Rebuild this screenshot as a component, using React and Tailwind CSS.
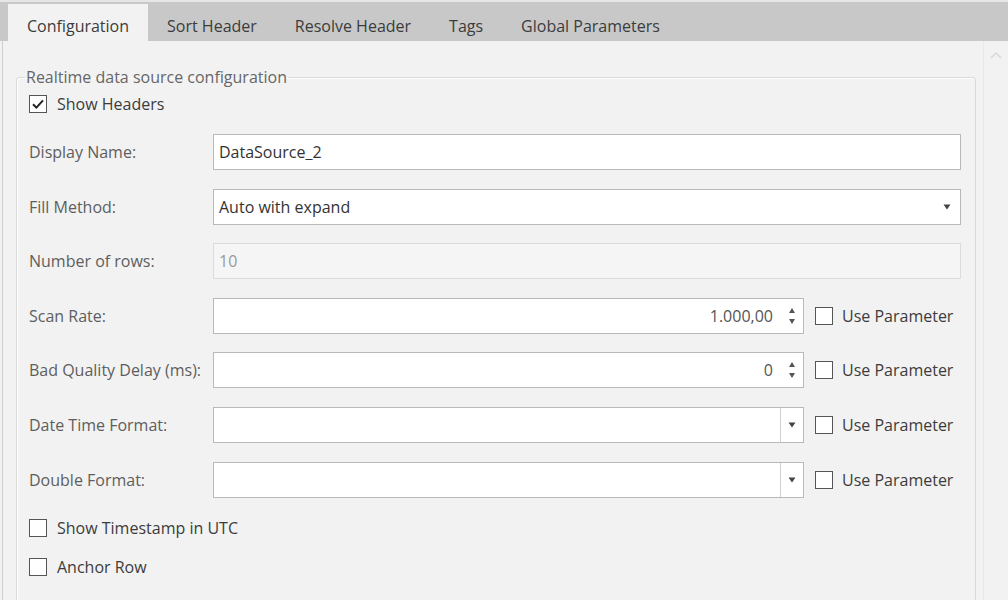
import React from "react";

const font = { fontFamily: '"Open Sans", "Noto Sans", sans-serif' };

function Tab({ label, active }) {
  return (
    <div
      className={
        "px-[19px] pt-[7px] flex items-center text-[16px] text-[#3c3c3c] h-[37px] " +
        (active ? "bg-[#f2f2f2]" : "")
      }
    >
      {label}
    </div>
  );
}

function Check({ checked }) {
  return (
    <div className="w-[18px] h-[18px] border border-[#555] bg-white flex items-center justify-center shrink-0">
      {checked && (
        <svg width="14" height="14" viewBox="0 0 14 14">
          <path d="M2 7.2 L5.4 10.6 L12 3.4" fill="none" stroke="#222" strokeWidth="2" />
        </svg>
      )}
    </div>
  );
}

function CheckRow({ checked, label }) {
  return (
    <div className="flex items-center gap-[10px] h-[18px]">
      <Check checked={checked} />
      <span className="text-[16px] text-[#3c3c3c] whitespace-nowrap">{label}</span>
    </div>
  );
}

function Arrow() {
  return (
    <svg width="8" height="6" viewBox="0 0 8 6">
      <path d="M0.5 0.5 L7.5 0.5 L4 5.5 Z" fill="#444" />
    </svg>
  );
}

function Label({ children }) {
  return (
    <div className="w-[184px] shrink-0 text-[16px] text-[#5e5e5e] whitespace-nowrap">{children}</div>
  );
}

function UseParam() {
  return (
    <div className="flex items-center gap-[9px] ml-[11px]">
      <Check />
      <span className="text-[16px] text-[#3c3c3c] whitespace-nowrap">Use Parameter</span>
    </div>
  );
}

function Spinner() {
  return (
    <div className="w-[22px] flex flex-col items-center justify-center gap-[6px]">
      <svg width="6" height="5" viewBox="0 0 6 5">
        <path d="M0 5 L6 5 L3 0 Z" fill="#555" />
      </svg>
      <svg width="6" height="5" viewBox="0 0 6 5">
        <path d="M0 0 L6 0 L3 5 Z" fill="#555" />
      </svg>
    </div>
  );
}

export default function App() {
  return (
    <div className="w-[1008px] h-[600px] bg-[#f2f2f2] overflow-hidden flex flex-col" style={font}>
      <div className="h-[2px] shrink-0 bg-[#e6e6e6]" />
      <div className="h-[39px] shrink-0 bg-[#c8c8c8] flex items-end pl-[8px]">
        <Tab label="Configuration" active />
        <Tab label="Sort Header" />
        <Tab label="Resolve Header" />
        <Tab label="Tags" />
        <Tab label="Global Parameters" />
      </div>
      <div className="flex-1 min-h-0 flex ml-[2px] border-l border-[#cfcfcf]">
        <div className="w-[980px] shrink-0 pl-[13px]">
          <fieldset className="mt-[26px] w-[960px] h-[560px] border border-[#d9d9d9] rounded-[3px] shadow-[inset_1px_1px_0_#ffffff]">
            <legend className="ml-[8px] px-[1px] text-[16px] leading-[20px] text-[#666]">
              Realtime data source configuration
            </legend>
            <div className="pl-[12px] pr-[14px]">
              <div className="mt-[8px]">
                <CheckRow checked label="Show Headers" />
              </div>
              <div className="mt-[21px] flex flex-col gap-[18.6px]">
                <div className="flex items-center h-[36px]">
                  <Label>Display Name:</Label>
                  <div className="flex-1 h-full bg-white border border-[#b9b9b9] flex items-center px-[5px] text-[16px] text-[#333]">
                    DataSource_2
                  </div>
                </div>
                <div className="flex items-center h-[36px]">
                  <Label>Fill Method:</Label>
                  <div className="flex-1 h-full bg-white border border-[#b9b9b9] flex items-center pl-[5px] pr-[9px] text-[16px] text-[#333]">
                    <span className="flex-1">Auto with expand</span>
                    <Arrow />
                  </div>
                </div>
                <div className="flex items-center h-[36px]">
                  <Label>Number of rows:</Label>
                  <div className="flex-1 h-full bg-[#f5f5f5] border border-[#dcdcdc] flex items-center px-[5px] text-[16px] text-[#9a9a9a]">
                    10
                  </div>
                </div>
                <div className="flex items-center h-[36px]">
                  <Label>Scan Rate:</Label>
                  <div className="w-[591px] h-full bg-white border border-[#b9b9b9] flex items-center pl-[5px] text-[16px] text-[#555]">
                    <span className="flex-1 text-right pr-[8px]">1.000,00</span>
                    <Spinner />
                  </div>
                  <UseParam />
                </div>
                <div className="flex items-center h-[36px]">
                  <Label>Bad Quality Delay (ms):</Label>
                  <div className="w-[591px] h-full bg-white border border-[#b9b9b9] flex items-center pl-[5px] text-[16px] text-[#555]">
                    <span className="flex-1 text-right pr-[8px]">0</span>
                    <Spinner />
                  </div>
                  <UseParam />
                </div>
                <div className="flex items-center h-[36px]">
                  <Label>Date Time Format:</Label>
                  <div className="w-[591px] h-full bg-white border border-[#b9b9b9] flex items-stretch">
                    <span className="flex-1" />
                    <div className="w-[23px] border-l border-[#d0d0d0] flex items-center justify-center">
                      <Arrow />
                    </div>
                  </div>
                  <UseParam />
                </div>
                <div className="flex items-center h-[36px]">
                  <Label>Double Format:</Label>
                  <div className="w-[591px] h-full bg-white border border-[#b9b9b9] flex items-stretch">
                    <span className="flex-1" />
                    <div className="w-[23px] border-l border-[#d0d0d0] flex items-center justify-center">
                      <Arrow />
                    </div>
                  </div>
                  <UseParam />
                </div>
              </div>
              <div className="mt-[21px] flex flex-col gap-[21px]">
                <CheckRow label="Show Timestamp in UTC" />
                <CheckRow label="Anchor Row" />
              </div>
            </div>
          </fieldset>
        </div>
        <div className="flex-1 border-l border-[#e8e8e8] flex justify-center pt-[10px]">
          <svg width="12" height="8" viewBox="0 0 12 8">
            <path d="M1 7 L6 2 L11 7" fill="none" stroke="#d8d8d8" strokeWidth="1.5" />
          </svg>
        </div>
      </div>
    </div>
  );
}
